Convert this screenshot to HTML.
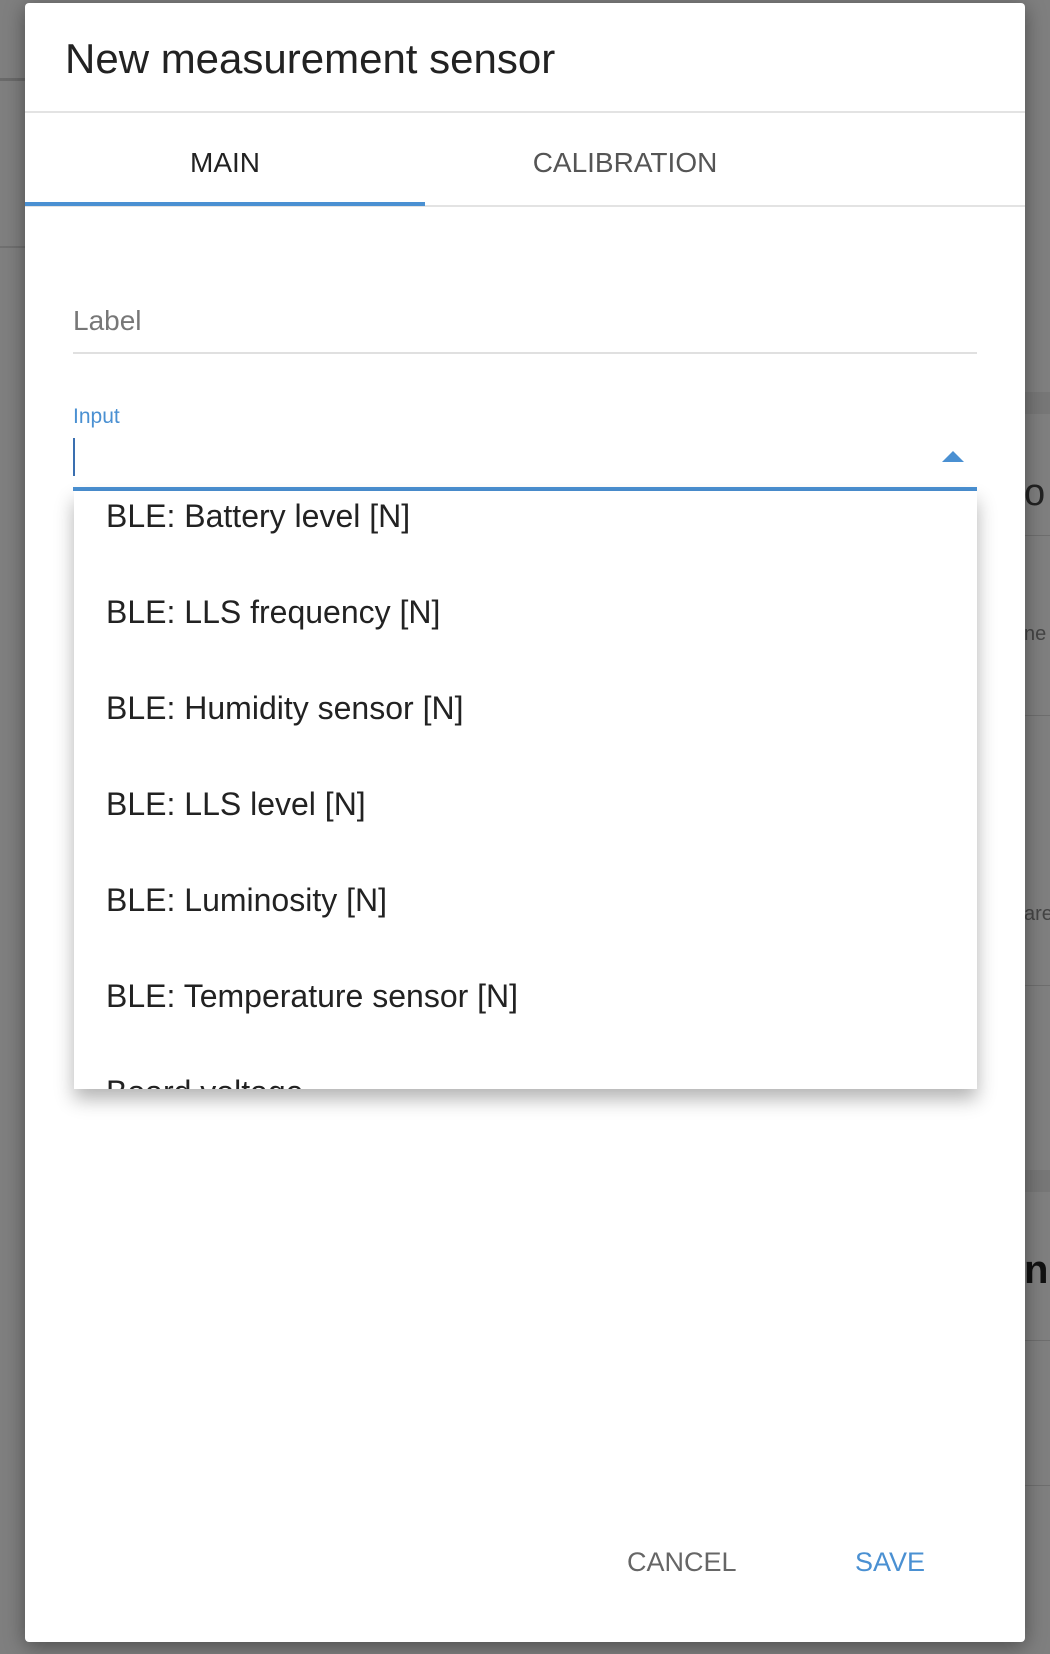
<!DOCTYPE html>
<html><head><style>
*{margin:0;padding:0;box-sizing:border-box}
body{width:1050px;height:1654px;background:#7f7f7f;position:relative;overflow:hidden;font-family:"Liberation Sans",sans-serif}
.abs{position:absolute}
.dlg{left:25px;top:3px;width:1000px;height:1639px;background:#fff;border-radius:4px;box-shadow:0 4px 20px rgba(0,0,0,.4)}
.t{position:absolute;white-space:nowrap;line-height:1}
.item{position:absolute;left:32px;font-size:32px;color:#222;white-space:nowrap;line-height:1}
</style></head><body>
<div class="abs" style="left:0;top:78px;width:25px;height:3px;background:#6a6a6a"></div>
<div class="abs" style="left:0;top:246px;width:25px;height:2px;background:#707070"></div>
<div class="abs" style="left:1025px;top:392px;width:25px;height:22px;background:#777"></div>
<div class="abs" style="left:1025px;top:535px;width:25px;height:1px;background:#6e6e6e"></div>
<div class="abs" style="left:1025px;top:715px;width:25px;height:1px;background:#6e6e6e"></div>
<div class="abs" style="left:1025px;top:985px;width:25px;height:1px;background:#6e6e6e"></div>
<div class="abs" style="left:1025px;top:1170px;width:25px;height:22px;background:#777"></div>
<div class="abs" style="left:1025px;top:1340px;width:25px;height:1px;background:#6e6e6e"></div>
<div class="abs" style="left:1025px;top:1485px;width:25px;height:1px;background:#6e6e6e"></div>
<div class="t" style="left:1024px;top:474px;font-size:38px;color:#222">o</div>
<div class="t" style="left:1024px;top:624px;font-size:20px;color:#444">ne</div>
<div class="t" style="left:1024px;top:904px;font-size:20px;color:#444">are</div>
<div class="t" style="left:1024px;top:1250px;font-size:40px;color:#111;font-weight:bold">n</div>

<div class="abs dlg">
  <div class="t" style="left:40px;top:35px;font-size:42px;color:#222">New measurement sensor</div>
  <div class="abs" style="left:0;top:108px;width:1000px;height:2px;background:#e3e3e3"></div>
  <div class="t" style="left:0;width:400px;text-align:center;top:146px;font-size:28px;color:#222">MAIN</div>
  <div class="t" style="left:400px;width:400px;text-align:center;top:146px;font-size:28px;color:#555">CALIBRATION</div>
  <div class="abs" style="left:0;top:202px;width:1000px;height:2px;background:#e3e3e3"></div>
  <div class="abs" style="left:0;top:199px;width:400px;height:4px;background:#4a90d2"></div>
  <div class="t" style="left:48px;top:304px;font-size:28px;color:#777">Label</div>
  <div class="abs" style="left:48px;top:349px;width:904px;height:2px;background:#e0e0e0"></div>
  <div class="t" style="left:48px;top:403px;font-size:21px;color:#4a90d2">Input</div>
  <div class="abs" style="left:48px;top:435px;width:2px;height:38px;background:#3a6fb0"></div>
  <svg class="abs" style="left:917px;top:447px" width="22" height="12"><polygon points="0,12 11,1 22,12" fill="#4a90d2"/></svg>
  <div class="abs" style="left:48px;top:484px;width:904px;height:4px;background:#4a90d2"></div>
  <div class="abs" style="left:49px;top:488px;width:903px;height:598px;background:#fff;box-shadow:0 10px 18px rgba(0,0,0,.3);overflow:hidden">
    <div class="item" style="top:9px">BLE: Battery level [N]</div>
    <div class="item" style="top:105px">BLE: LLS frequency [N]</div>
    <div class="item" style="top:201px">BLE: Humidity sensor [N]</div>
    <div class="item" style="top:297px">BLE: LLS level [N]</div>
    <div class="item" style="top:393px">BLE: Luminosity [N]</div>
    <div class="item" style="top:489px">BLE: Temperature sensor [N]</div>
    <div class="item" style="top:585px">Board voltage</div>
  </div>
  <div class="t" style="left:602px;top:1546px;font-size:27px;color:#666">CANCEL</div>
  <div class="t" style="left:830px;top:1546px;font-size:27px;color:#4a90d2">SAVE</div>
</div>
</body></html>
